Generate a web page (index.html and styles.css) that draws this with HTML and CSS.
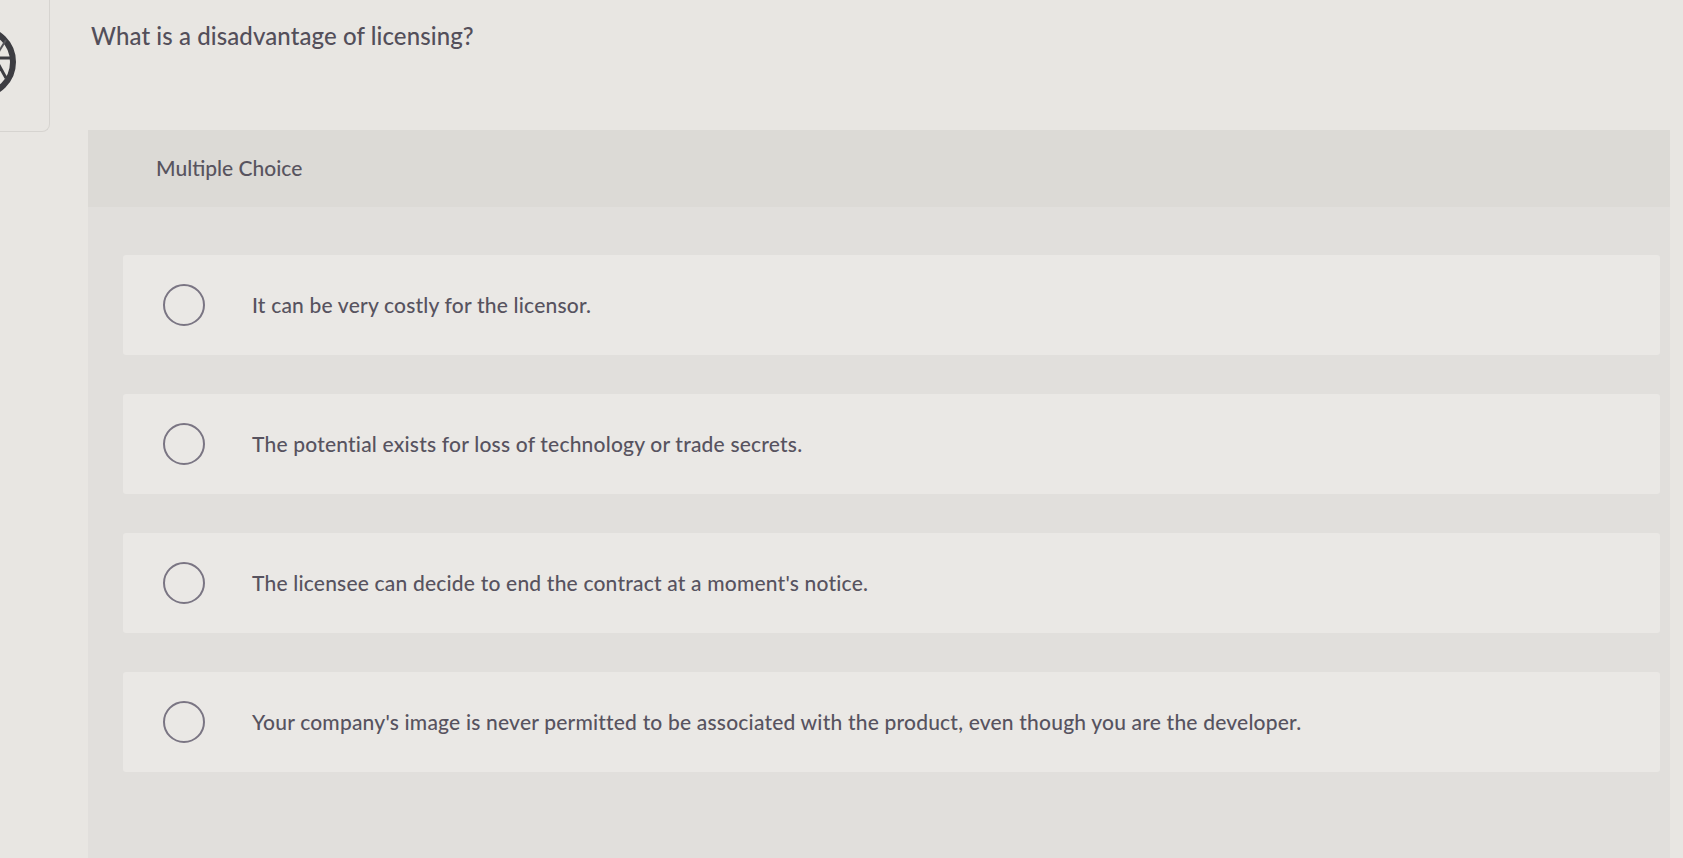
FILE: index.html
```html
<!DOCTYPE html>
<html lang="en">
<head>
<meta charset="utf-8">
<title>Multiple Choice</title>
<link rel="stylesheet" href="styles.css">
</head>
<body>
<div class="page">
  <aside class="rail">
    <svg class="rail-icon" width="50" height="132" viewBox="0 0 50 132" aria-hidden="true">
      <circle cx="-20" cy="62" r="33" fill="none" stroke="#3d3d42" stroke-width="6"/>
      <line x1="-20" y1="58" x2="12" y2="58" stroke="#3d3d42" stroke-width="3"/>
      <line x1="-4" y1="60" x2="6" y2="78" stroke="#3d3d42" stroke-width="3"/>
      <line x1="-4" y1="56" x2="6" y2="40" stroke="#55555a" stroke-width="2"/>
    </svg>
  </aside>
  <main class="main">
    <h1 class="question">What is a disadvantage of licensing?</h1>
    <section class="panel">
      <div class="panel-head">Multiple Choice</div>
      <ul class="choices">
        <li class="choice"><span class="radio"></span><span class="label">It can be very costly for the licensor.</span></li>
        <li class="choice"><span class="radio"></span><span class="label">The potential exists for loss of technology or trade secrets.</span></li>
        <li class="choice"><span class="radio"></span><span class="label">The licensee can decide to end the contract at a moment's notice.</span></li>
        <li class="choice"><span class="radio"></span><span class="label">Your company's image is never permitted to be associated with the product, even though you are the developer.</span></li>
      </ul>
    </section>
  </main>
</div>
</body>
</html>
```

FILE: styles.css
```css
html, body {
  margin: 0;
  padding: 0;
}
body {
  background: #e8e6e2;
  font-family: Lato, "Open Sans", "Liberation Sans", sans-serif;
  color: #57535e;
  height: 858px;
  overflow: hidden;
}
.page {
  display: flex;
  height: 858px;
}
.rail {
  flex: 0 0 50px;
  width: 50px;
  height: 132px;
  box-sizing: border-box;
  border-right: 1px solid #d6d4d0;
  border-bottom: 1px solid #d6d4d0;
  border-bottom-right-radius: 8px;
  overflow: hidden;
}
.rail-icon {
  display: block;
}
.main {
  flex: 1;
  display: flex;
  flex-direction: column;
  padding: 0 13px 0 38px;
  min-width: 0;
}
.question {
  margin: 0 0 79px;
  padding: 21px 0 0 3px;
  font-size: 24px;
  line-height: 30px;
  font-weight: 500;
  letter-spacing: 0.1px;
  color: #534f5a;
}
.panel {
  flex: 1;
  background: #e1dfdc;
  display: flex;
  flex-direction: column;
}
.panel-head {
  height: 77px;
  box-sizing: border-box;
  padding: 26px 0 0 68px;
  font-size: 21px;
  line-height: 24px;
  font-weight: 500;
  background: #dcdad6;
  color: #58545f;
}
.choices {
  list-style: none;
  margin: 0;
  padding: 48px 10px 0 35px;
  display: flex;
  flex-direction: column;
  gap: 39px;
}
.choice {
  height: 100px;
  display: flex;
  align-items: center;
  padding-left: 40px;
  background: #eae8e5;
  border-radius: 3px;
}
.radio {
  flex: 0 0 42px;
  width: 42px;
  height: 42px;
  box-sizing: border-box;
  border: 2px solid #7a7583;
  border-radius: 50%;
}
.label {
  margin-left: 47px;
  font-size: 21px;
  line-height: 24px;
  font-weight: 500;
  letter-spacing: 0.2px;
  color: #57535f;
}
```
